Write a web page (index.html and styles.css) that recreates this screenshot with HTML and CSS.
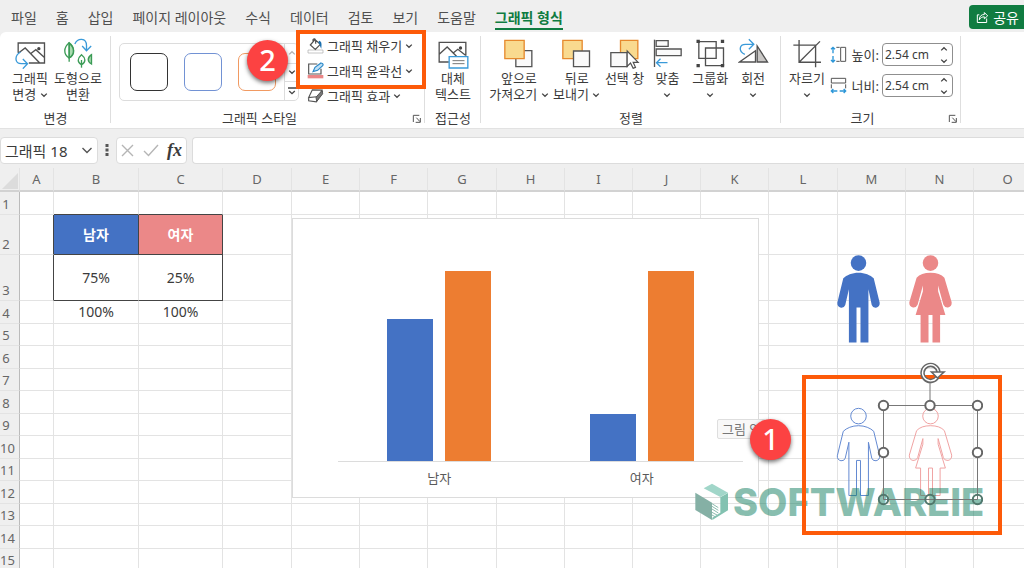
FILE: index.html
```html
<!DOCTYPE html>
<html lang="ko">
<head>
<meta charset="utf-8">
<title>그래픽 형식</title>
<link rel="stylesheet" href="styles.css">
</head>
<body>
<svg class="defs" aria-hidden="true">
  <symbol id="chev" viewBox="0 0 8 8"><path d="M1.2 2.6 4 5.3 6.8 2.6" fill="none" stroke="#444" stroke-width="1.3"/></symbol>
  <symbol id="launch" viewBox="368 344 30 30"><path d="M372 368V348H390M381 355l11 12M393 356v13H379" fill="none" stroke="#555" stroke-width="3"/></symbol>
  <symbol id="man" viewBox="108 41 136 271"><circle cx="176" cy="68" r="23.5"/><path d="M176 97C195 97 212 104 222 114L240 188Q241 200 229 203 219 204 216 195L206 147V308H182V202H170V308H147V147L136 195Q133 204 123 203 111 200 112 188L130 114C140 104 157 97 176 97Z"/></symbol>
  <symbol id="woman" viewBox="323 41 136 271"><circle cx="391" cy="68" r="23.5"/><path d="M391 97C410 97 424 102 433 112L455 186Q456 199 444 202 434 203 430 194L414 136V153L436 225H420V308H397V225H385V308H361V225H346L368 153V136L352 194Q348 203 338 202 326 199 327 186L349 112C358 102 372 97 391 97Z"/></symbol>
</svg>
<div class="app">
  <header class="tabbar">
    <nav class="tabs">
      <button class="tab">파일</button><button class="tab">홈</button><button class="tab">삽입</button><button class="tab">페이지 레이아웃</button><button class="tab">수식</button><button class="tab">데이터</button><button class="tab">검토</button><button class="tab">보기</button><button class="tab">도움말</button><button class="tab tab-active">그래픽 형식</button>
    </nav>
    <button class="share"><svg width="13" height="13" viewBox="586 34 39 38"><path d="M596 45h-6v23h28V56M596 58c1-10 7-14 15-14v-6l10 10-10 9v-6c-6 0-11 2-15 9Z" fill="none" stroke="#fff" stroke-width="3"/></svg>공유</button>
  </header>

  <section class="ribbon">
    <div class="group g-change">
      <div class="tools">
        <button class="tool">
          <svg class="icon" viewBox="45 114 92 93"><g fill="none" stroke="#505050" stroke-width="4"><path d="M54 158V129H133V189H86M54 160 75 144 118 188M91 161 107 149 132 172"/></g><circle cx="116" cy="146" r="5" fill="#444"/><path d="M61 156C42 167 43 191 64 191H80M68 177 82 191 68 206" fill="none" stroke="#3a9ad9" stroke-width="4"/></svg>
          <span>그래픽<br>변경 <svg class="chev"><use href="#chev"/></svg></span>
        </button>
        <button class="tool tool-md">
          <svg class="icon" viewBox="188 112 92 93"><g stroke="#3b9b56" stroke-width="4" fill="#fff"><path d="M206 126C189 140 188 162 206 172 225 162 223 139 206 126Z"/><path d="M206 128C223 140 223 162 206 171Z" fill="#a9dcb0"/><path d="M206 126V183" fill="none"/><path d="M243 162C230 173 230 185 243 192 257 184 256 172 243 162Z"/><path d="M243 178V201" /><path d="M273 162C260 171 260 182 273 190Z" fill="#a9dcb0"/></g><path d="M223 130C232 111 258 111 258 135V148M245 136 258 150 272 136" fill="none" stroke="#3a9ad9" stroke-width="4"/></svg>
          <span>도형으로<br>변환</span>
        </button>
      </div>
      <div class="caption">변경</div>
    </div>

    <div class="group g-style">
      <div class="tools">
        <div class="gallery">
          <button class="swatch swatch-black" aria-label="검정 윤곽선"></button>
          <button class="swatch swatch-blue" aria-label="파랑 윤곽선"></button>
          <button class="swatch swatch-orange" aria-label="주황 윤곽선"></button>
          <div class="scroller">
            <button aria-label="위로"><svg class="chev flip faded"><use href="#chev"/></svg></button>
            <button aria-label="아래로"><svg class="chev"><use href="#chev"/></svg></button>
            <button aria-label="자세히"><svg width="8" height="9" viewBox="0 0 8 9"><path d="M0 1h8M1.200 4 4 6.700 6.800 4" fill="none" stroke="#444" stroke-width="1.300"/></svg></button>
          </div>
        </div>
        <div class="menu">
          <button class="row"><svg width="17" height="17" viewBox="52 112 51 51"><path d="M55 151h45v9H55Z" fill="#fff" stroke="#aaa" stroke-width="2"/><path d="M62 136 76 120 92 134 77 149ZM70 127V120q5-6 8 2v10" fill="#fff" stroke="#505050" stroke-width="3.500"/><path d="M88 123c9 2 8 10 7 24-5-7-3-14-9-18Z" fill="#1b6fae"/></svg>그래픽 채우기<svg class="chev"><use href="#chev"/></svg></button>
          <button class="row"><svg width="17" height="17" viewBox="52 188 51 51"><path d="M83 194H57v30h37V208" fill="#fff" stroke="#555" stroke-width="3.500"/><path d="m70 217 6-13 18-13q9 2 5 8L84 213Z" fill="#bfe0f5" stroke="#2b88c8" stroke-width="3.500"/><path d="M54 227h47v10H54Z" fill="#eb8686"/></svg>그래픽 윤곽선<svg class="chev"><use href="#chev"/></svg></button>
          <button class="row"><svg width="17" height="17" viewBox="52 264 51 48"><path d="M68 271 97 272 88 291 57 294ZM57 294v10l23 3 9-16 10-17" fill="#fff" stroke="#555" stroke-width="3.500"/><path d="m97 273 2 10-18 23-2-13Z" fill="#777" stroke="#555" stroke-width="3"/></svg>그래픽 효과<svg class="chev"><use href="#chev"/></svg></button>
        </div>
      </div>
      <div class="caption caption-wide">그래픽 스타일</div>
      <button class="launcher" aria-label="서식 창"><svg width="10" height="10"><use href="#launch"/></svg></button>
    </div>

    <div class="group g-alt">
      <div class="tools">
        <button class="tool">
          <svg class="icon" viewBox="446 116 92 93"><path d="M478 188H449V129H529V169M450 164 473 143 501 171M491 161 505 150 528 168" fill="none" stroke="#505050" stroke-width="4"/><circle cx="513" cy="146" r="5" fill="#444"/><path d="M479 172h56v34h-56Z" fill="#fff" stroke="#3a9ad9" stroke-width="4"/><path d="M489 184h36M489 193h36" stroke="#777" stroke-width="3"/></svg>
          <span>대체<br>텍스트</span>
        </button>
      </div>
      <div class="caption">접근성</div>
    </div>

    <div class="group g-arrange">
      <div class="tools">
        <button class="tool tool-lg">
          <svg class="icon" viewBox="644 114 92 93"><path d="M682 152h48v48h-48Z" fill="#fafafa" stroke="#555" stroke-width="4"/><path d="M649 121h58v55h-58Z" fill="#f9da8f" stroke="#e68a2e" stroke-width="4"/></svg>
          <span>앞으로<br>가져오기 <svg class="chev"><use href="#chev"/></svg></span>
        </button>
        <button class="tool tool-md">
          <svg class="icon" viewBox="816 114 92 93"><path d="M821 121h58v55h-58Z" fill="#f9da8f" stroke="#e68a2e" stroke-width="4"/><path d="M853 153h48v47h-48Z" fill="#fafafa" stroke="#555" stroke-width="4"/></svg>
          <span>뒤로<br>보내기 <svg class="chev"><use href="#chev"/></svg></span>
        </button>
        <button class="tool">
          <svg class="icon" viewBox="91 114 92 93"><path d="M125 121h52v55h-52Z" fill="#f9da8f" stroke="#e68a2e" stroke-width="4"/><path d="M96 158h49v42H96Z" fill="#fafafa" stroke="#555" stroke-width="4"/><path d="M145 153V199L155 189 163 205 170 202 163 187H178Z" fill="#fff" stroke="#505050" stroke-width="3.500"/></svg>
          <span>선택 창</span>
        </button>
        <button class="tool">
          <svg class="icon" viewBox="220 114 92 93"><path d="M227 119V201" stroke="#555" stroke-width="4"/><path d="M232 122h36v17h-36ZM232 147h75v20h-75Z" fill="#fafafa" stroke="#555" stroke-width="4"/><path d="M266 188H233M245 176 233 188 245 200" fill="none" stroke="#3a9ad9" stroke-width="4"/></svg>
          <span>맞춤<br><svg class="chev"><use href="#chev"/></svg></span>
        </button>
        <button class="tool">
          <svg class="icon" viewBox="346 114 92 93"><g fill="none" stroke="#505050" stroke-width="4"><path d="M357 125h52v50h-52ZM377 144h54v53h-54Z"/></g><path d="M350 119h10v10h-10ZM423 119h10v10h-10ZM350 192h10v10h-10ZM423 192h10v10h-10Z" fill="#444"/></svg>
          <span>그룹화<br><svg class="chev"><use href="#chev"/></svg></span>
        </button>
        <button class="tool">
          <svg class="icon" viewBox="471 114 92 93"><path d="M523 152V186H475Z" fill="#fff" stroke="#505050" stroke-width="4"/><path d="M528 138V186H559Z" fill="#c9c7c5" stroke="#505050" stroke-width="4"/><path d="M491 163C470 153 475 133 493 133H516M503 118 518 133 503 148" fill="none" stroke="#3a9ad9" stroke-width="4"/></svg>
          <span>회전<br><svg class="chev"><use href="#chev"/></svg></span>
        </button>
      </div>
      <div class="caption">정렬</div>
    </div>

    <div class="group g-size">
      <div class="tools">
        <button class="tool">
          <svg class="icon" viewBox="40 116 92 88"><path d="M44 135H110V201M61 120V186H126M61 186 123 124" fill="none" stroke="#505050" stroke-width="4"/></svg>
          <span>자르기<br><svg class="chev"><use href="#chev"/></svg></span>
        </button>
        <div class="fields">
          <div class="field">
            <svg width="17" height="17" viewBox="158 138 51 51"><path d="M177 142h10M177 184h10M190 142h15v42h-15Z" fill="none" stroke="#555" stroke-width="3"/><path d="M167 142v18M167 168v18M161 148l6-6 6 6M161 180l6 6 6-6" fill="none" stroke="#2b96d8" stroke-width="4"/></svg>
            <label for="h">높이:</label>
            <span class="spin"><input id="h" type="text" value="2.54 cm"><span class="arrows"><svg class="chev flip"><use href="#chev"/></svg><svg class="chev"><use href="#chev"/></svg></span></span>
          </div>
          <div class="field">
            <svg width="17" height="17" viewBox="158 230 51 51"><path d="M162 234h43v14h-43ZM162 252v12M205 252v12" fill="none" stroke="#555" stroke-width="3"/><path d="M162 272h18M187 272h18M168 266l-6 6 6 6M199 266l6 6-6 6" fill="none" stroke="#2b96d8" stroke-width="4"/></svg>
            <label for="w">너비:</label>
            <span class="spin"><input id="w" type="text" value="2.54 cm"><span class="arrows"><svg class="chev flip"><use href="#chev"/></svg><svg class="chev"><use href="#chev"/></svg></span></span>
          </div>
        </div>
      </div>
      <div class="caption caption-wide">크기</div>
      <button class="launcher" aria-label="크기 창"><svg width="10" height="10"><use href="#launch"/></svg></button>
    </div>

    <div class="mark mark-menu"></div>
    <div class="badge badge-two">2</div>
  </section>

  <section class="formula">
    <div class="namebox"><input type="text" aria-label="이름 상자" value="그래픽 18"><button aria-label="이름 목록"><svg width="12" height="12" viewBox="0 0 12 12"><path d="M1.500 4 6 8.500 10.500 4" fill="none" stroke="#555" stroke-width="1.400"/></svg></button></div>
    <svg class="dots" width="4" height="12" viewBox="0 0 4 12"><path d="M.5 0h3v3h-3ZM.5 4.500h3v3h-3ZM.5 9h3v3h-3Z" fill="#555"/></svg>
    <div class="fxbox">
      <button aria-label="취소"><svg width="13" height="13" viewBox="0 0 13 13"><path d="m1 1 11 11M12 1 1 12" stroke="#b5b5b5" stroke-width="1.400"/></svg></button>
      <button aria-label="입력"><svg width="16" height="13" viewBox="0 0 16 13"><path d="m1 7 4.500 4.500L15 1" fill="none" stroke="#b5b5b5" stroke-width="1.400"/></svg></button>
      <button class="fx">fx</button>
    </div>
    <input class="formula-input" type="text" aria-label="수식 입력줄">
  </section>

  <main class="sheet">
    <table class="grid">
      <colgroup><col class="c-head"><col class="c-a"><col class="c-b"><col class="c-c"><col class="c-w"><col class="c-n"><col class="c-n"><col class="c-w"><col class="c-n"><col class="c-n"><col class="c-n"><col class="c-n"><col class="c-w"><col class="c-n"><col class="c-n"><col class="c-n"></colgroup>
      <thead><tr><th class="corner"><svg width="16" height="16" viewBox="0 0 16 16"><path d="M16 0V16H0Z" fill="#dcdcdc"/></svg></th><th>A</th><th>B</th><th>C</th><th>D</th><th>E</th><th>F</th><th>G</th><th>H</th><th>I</th><th>J</th><th>K</th><th>L</th><th>M</th><th>N</th><th>O</th></tr></thead>
      <tbody>
        <tr class="odd"><th>1</th><td></td><td class="eb"></td><td class="eb"></td><td></td><td></td><td></td><td></td><td></td><td></td><td></td><td></td><td></td><td></td><td></td><td></td></tr>
        <tr class="r2"><th>2</th><td class="er"></td><td class="male er eb">남자</td><td class="female er eb">여자</td><td></td><td></td><td></td><td></td><td></td><td></td><td></td><td></td><td></td><td></td><td></td><td></td></tr>
        <tr class="r3"><th>3</th><td class="er"></td><td class="eb">75%</td><td class="er eb">25%</td><td></td><td></td><td></td><td></td><td></td><td></td><td></td><td></td><td></td><td></td><td></td><td></td></tr>
        <tr class="odd"><th>4</th><td></td><td>100%</td><td>100%</td><td></td><td></td><td></td><td></td><td></td><td></td><td></td><td></td><td></td><td></td><td></td><td></td></tr>
        <tr><th>5</th><td></td><td></td><td></td><td></td><td></td><td></td><td></td><td></td><td></td><td></td><td></td><td></td><td></td><td></td><td></td></tr>
        <tr class="odd"><th>6</th><td></td><td></td><td></td><td></td><td></td><td></td><td></td><td></td><td></td><td></td><td></td><td></td><td></td><td></td><td></td></tr>
        <tr><th>7</th><td></td><td></td><td></td><td></td><td></td><td></td><td></td><td></td><td></td><td></td><td></td><td></td><td></td><td></td><td></td></tr>
        <tr class="odd"><th>8</th><td></td><td></td><td></td><td></td><td></td><td></td><td></td><td></td><td></td><td></td><td></td><td></td><td></td><td></td><td></td></tr>
        <tr><th>9</th><td></td><td></td><td></td><td></td><td></td><td></td><td></td><td></td><td></td><td></td><td></td><td></td><td></td><td></td><td></td></tr>
        <tr class="odd"><th>10</th><td></td><td></td><td></td><td></td><td></td><td></td><td></td><td></td><td></td><td></td><td></td><td></td><td></td><td></td><td></td></tr>
        <tr><th>11</th><td></td><td></td><td></td><td></td><td></td><td></td><td></td><td></td><td></td><td></td><td></td><td></td><td></td><td></td><td></td></tr>
        <tr class="odd"><th>12</th><td></td><td></td><td></td><td></td><td></td><td></td><td></td><td></td><td></td><td></td><td></td><td></td><td></td><td></td><td></td></tr>
        <tr><th>13</th><td></td><td></td><td></td><td></td><td></td><td></td><td></td><td></td><td></td><td></td><td></td><td></td><td></td><td></td><td></td></tr>
        <tr class="odd"><th>14</th><td></td><td></td><td></td><td></td><td></td><td></td><td></td><td></td><td></td><td></td><td></td><td></td><td></td><td></td><td></td></tr>
        <tr><th>15</th><td></td><td></td><td></td><td></td><td></td><td></td><td></td><td></td><td></td><td></td><td></td><td></td><td></td><td></td><td></td></tr>
      </tbody>
    </table>

    <div class="chart">
      <div class="plot">
        <div class="pair"><div class="bar bar-blue" style="height:75%"></div><div class="bar bar-orange" style="height:100%"></div></div>
        <div class="pair"><div class="bar bar-blue" style="height:25%"></div><div class="bar bar-orange" style="height:100%"></div></div>
      </div>
      <div class="axis"><span>남자</span><span>여자</span></div>
    </div>
    <div class="tip">그림 영</div>

    <svg class="person man-solid"><use href="#man"/></svg>
    <svg class="person woman-solid"><use href="#woman"/></svg>
    <svg class="person man-line"><use href="#man"/></svg>
    <svg class="person woman-line"><use href="#woman"/></svg>

    <div class="watermark">
      <svg width="34" height="38" viewBox="14 370 102 112"><path d="M15 398 65 428V480L15 450Z" fill="#85b0a5"/><path d="M40 385 65 371 113 398 90 411Z" fill="#a1d6c9"/><path d="M90 412 113 399V451L66 480V473L90 458Z" fill="#83c2b1"/><path d="M65 431 84 443M65 439 84 451M65 447 84 459M65 457l17 9M65 465l11 6" stroke="#8dbdb0" stroke-width="3"/></svg>
      <span>SOFTWAREIE</span>
    </div>

    <div class="mark mark-shape"></div>
    <svg class="selection" viewBox="0 0 106 146">
      <g fill="none" stroke="#777" stroke-width="1"><path d="M6.500 43.500h94v94h-94ZM53 21V43"/></g>
      <g fill="#fff" stroke="#666" stroke-width="2"><circle cx="6.500" cy="43.500" r="4.700"/><circle cx="53" cy="43.500" r="4.700"/><circle cx="100.500" cy="43.500" r="4.700"/><circle cx="6.500" cy="90.500" r="4.700"/><circle cx="100.500" cy="90.500" r="4.700"/></g>
      <g fill="none" stroke="#51776c" stroke-width="2"><circle cx="6.500" cy="137.500" r="4.700"/><circle cx="53" cy="137.500" r="4.700"/><circle cx="100.500" cy="137.500" r="4.700"/></g>
      <path d="M60.500 15A8 8 0 1 1 61.500 10" fill="none" stroke="#666" stroke-width="4.500"/>
      <path d="M60 15.500A8 8 0 1 1 61.500 10" fill="none" stroke="#fff" stroke-width="1.300"/>
      <path d="M54.500 10H67L60.500 16Z" fill="#fff" stroke="#666" stroke-width="1.600"/>
    </svg>
    <div class="badge badge-one">1</div>
  </main>
</div>
</body>
</html>
```

FILE: styles.css
```css
* { box-sizing: border-box; }
body { margin: 0; font-family: "Noto Sans", "Noto Sans CJK KR", sans-serif; font-size: 13px; color: #3b3b3b; background: #efefef; }
button { margin: 0; padding: 0; border: 0; background: none; font: inherit; color: inherit; white-space: nowrap; }
input { font: inherit; color: inherit; }
.defs { display: none; }
.app { display: flex; flex-direction: column; height: 100vh; overflow: hidden; }

/* tab strip */
.tabbar { display: flex; align-items: center; justify-content: space-between; height: 32px; flex: none; padding-left: 11px; }
.tabs { display: flex; gap: 19px; padding-top: 4px; }
.tab { height: 24px; padding-top: 1px; font-size: 14px; line-height: 20px; color: #505050; border-bottom: 2px solid transparent; }
.tab-active { color: #107c41; font-weight: 700; border-bottom-color: #107c41; }
.share { display: flex; align-items: center; gap: 4px; height: 24px; margin-top: 2px; padding: 0 5px 0 7px; font-size: 14px; color: #fff; background: #107c41; border-radius: 4px 0 0 4px; }

/* ribbon */
.ribbon { position: relative; display: flex; flex: none; height: 97px; padding-top: 4px; background: #fff; border-radius: 6px 0 0 0; border-bottom: 1px solid #e2e2e2; }
.group { position: relative; display: flex; flex-direction: column; padding: 0 8px; }
.group::after { content: ""; position: absolute; top: 0; right: 0; bottom: 5px; width: 1px; background: #dedede; }
.tools { display: flex; gap: 3px; height: 74px; padding-top: 2px; }
.tool { display: flex; flex-direction: column; align-items: center; width: 40px; line-height: 16px; }
.tool-md { width: 50px; }
.tool-lg { width: 60px; }
.icon { width: 31px; height: 31px; margin-bottom: 1px; flex: none; }
.chev { width: 8px; height: 8px; }
.flip { transform: rotate(180deg); }
.faded { opacity: 0.4; }
.caption { text-align: center; line-height: 16px; }
.caption-wide { padding-right: 17px; }
.launcher { position: absolute; right: 3px; bottom: 4px; line-height: 10px; }
.launcher svg, .scroller svg, .row svg, .field > svg { display: block; flex: none; }
.g-change { width: 111px; }
.g-change .tools { padding-left: 2px; }
.g-style { width: 314px; }
.g-alt { width: 56px; }
.g-arrange { width: 300px; }
.g-size { width: 180px; }
.gallery { display: flex; align-items: center; gap: 16px; width: 180px; height: 58px; margin-top: 5px; padding-left: 10px; border: 1px solid #dcdcdc; border-radius: 5px; }
.swatch { flex: none; width: 38px; height: 38px; border: 1px solid; border-radius: 7px; }
.swatch-black { border-color: #333; }
.swatch-blue { border-color: #7292d4; }
.swatch-orange { border-color: #f19a62; }
.scroller { display: grid; grid-template-rows: repeat(3, 1fr); align-self: stretch; flex: 1; margin-left: -8px; border-left: 1px solid #dcdcdc; }
.scroller button { display: grid; place-items: center; }
.scroller button + button { border-top: 1px solid #dcdcdc; }
.menu { display: flex; flex-direction: column; padding: 0 0 0 5px; margin-top: -5px; }
.row { display: flex; align-items: center; gap: 3px; height: 25px; }
.fields { display: flex; flex-direction: column; gap: 8px; padding: 5px 0 0 2px; }
.field { display: flex; align-items: center; gap: 3px; }
.field label { width: 29px; white-space: nowrap; text-align: right; }
.spin { display: flex; align-items: center; width: 71px; height: 23px; border: 1px solid #8f8f8f; border-radius: 4px; }
.spin input { width: 52px; padding: 0 0 0 2px; border: 0; background: none; font-size: 12px; }
.arrows { display: flex; flex-direction: column; gap: 4px; padding-left: 5px; }

/* formula bar */
.formula { display: flex; align-items: center; flex: none; height: 39px; padding-top: 3px; gap: 5px; }
.formula > div, .formula-input { height: 27px; background: #fff; border: 1px solid #dcdcdc; border-radius: 4px; }
.namebox { display: flex; align-items: center; width: 98px; }
.namebox input { width: 80px; padding: 0 0 0 4px; border: 0; font-size: 15px; background: none; }
.namebox button { display: grid; }
.dots { margin: 0 2px; }
.fxbox { display: flex; align-items: center; justify-content: space-between; width: 71px; padding: 0 4px; }
.fxbox svg { display: block; }
.fx { font: italic bold 18px/20px "Liberation Serif", serif; }
.formula-input { flex: 1; min-width: 0; border-right: 0; border-radius: 4px 0 0 4px; }

/* worksheet */
.sheet { position: relative; flex: 1; min-height: 0; overflow: hidden; background: #fff; }
.grid { width: 1042px; table-layout: fixed; border-collapse: separate; border-spacing: 0; }
.c-head { width: 20px; } .c-a { width: 34px; } .c-b { width: 85px; } .c-c { width: 84px; } .c-w { width: 69px; } .c-n { width: 68px; }
.grid th, .grid td { padding: 0; border: 0 solid #e3e3e3; border-width: 0 1px 1px 0; text-align: center; line-height: 20px; }
.grid th { font-weight: 400; color: #666; background: #efefef; }
.grid thead th { height: 24px; border-bottom: 2px solid #d2d2d2; }
.grid tbody th { padding-right: 7px; vertical-align: bottom; border-right-color: #bbb; }
.grid .corner { padding: 3px 0 0 2px; }
.corner svg { display: block; }
.grid tbody tr { height: 22px; }
.grid tbody .odd { height: 23px; }
.grid tbody .r2 { height: 40px; }
.grid tbody .r3 { height: 46px; }
.grid td { font-size: 14px; }
.grid .er { border-right-color: #444; }
.grid .eb { border-bottom-color: #444; }
.grid .male, .grid .female { color: #fff; font-weight: 700; }
.male { background: #4472c4; }
.female { background: #eb8888; }

/* objects floating on the worksheet */
.chart { position: absolute; left: 292px; top: 50px; width: 467px; height: 280px; padding: 52px 15px 0 45px; background: #fff; border: 1px solid #dcdcdc; }
.plot { display: grid; grid-template-columns: 1fr 1fr; height: 191px; border-bottom: 1px solid #dcdcdc; }
.pair { display: flex; align-items: flex-end; justify-content: center; gap: 12px; }
.bar { width: 46px; }
.bar-blue { background: #4472c4; }
.bar-orange { background: #ed7d31; }
.axis { display: grid; grid-template-columns: 1fr 1fr; padding-top: 7px; text-align: center; line-height: 18px; color: #595959; }
.tip { position: absolute; left: 717px; top: 251px; padding: 0 4px; font-size: 13px; line-height: 18px; color: #777; background: #f8f8f8; border: 1px solid #dedede; border-radius: 2px; }
.person { position: absolute; width: 45px; height: 90px; }
.man-solid { left: 836px; top: 86px; fill: #4472c4; }
.woman-solid { left: 908px; top: 86px; fill: #eb8888; }
.man-line { left: 836px; top: 239px; fill: none; stroke: #6389d2; stroke-width: 3px; }
.woman-line { left: 908px; top: 239px; fill: none; stroke: #f0a2a2; stroke-width: 3px; }
.watermark { position: absolute; left: 695px; top: 314px; display: flex; align-items: center; gap: 4px; font: 800 38px/40px Inter, sans-serif; color: #137f62; }
.watermark span { opacity: 0.5; }
.selection { position: absolute; left: 877px; top: 194px; width: 106px; height: 146px; }
.mark { position: absolute; border: 4px solid #fd5a09; }
.mark-menu { left: 296px; top: -2px; width: 130px; height: 59px; }
.mark-shape { left: 802px; top: 207px; width: 200px; height: 160px; }
.badge { position: absolute; width: 41px; height: 41px; border-radius: 50%; background: #fc4242; box-shadow: 0 2px 4px rgba(0, 0, 0, 0.55); color: #fff; font: 500 29px/40px "Noto Sans", sans-serif; text-align: center; }
.badge-one { left: 750px; top: 251px; }
.badge-two { left: 247px; top: 8px; }
```
